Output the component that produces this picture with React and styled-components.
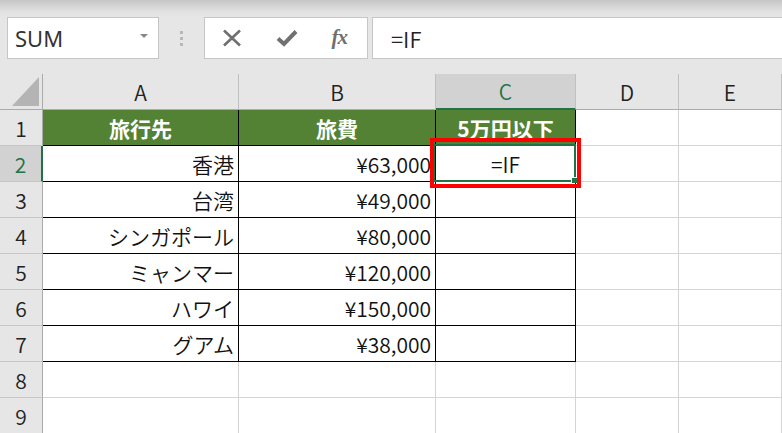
import React from 'react';
import styled, { createGlobalStyle } from 'styled-components';

// ========================== STYLES:BEGIN ========================== //
const GlobalStyle = createGlobalStyle`
  html, body {
    margin: 0;
    padding: 0;
    background: #e6e6e6;
  }
  body {
    font-family: 'Noto Sans CJK JP', 'Noto Sans', sans-serif;
    overflow: hidden;
  }
`;

const Frame = styled.div`
  width: 782px;
  height: 433px;
  display: flex;
  flex-direction: column;
  background: #e6e6e6;
  overflow: hidden;
`;

const TopStrip = styled.div`
  flex: 0 0 17px;
  background: linear-gradient(#c6c6c6, #e2e2e2 70%, #e6e6e6);
`;

const Toolbar = styled.div`
  flex: 0 0 42px;
  display: flex;
  padding-left: 7px;
`;

const Box = styled.div`
  box-sizing: border-box;
  background: #fff;
  border: 1px solid #c6c6c6;
  display: flex;
  align-items: center;
`;

const NameBox = styled(Box)`
  width: 152px;
  justify-content: space-between;
  padding: 0 10px 0 7px;
  font-family: 'Noto Sans', sans-serif;
  font-size: 22px;
  color: #333;
`;

const DropArrow = styled.span`
  width: 0;
  height: 0;
  border-left: 4px solid transparent;
  border-right: 4px solid transparent;
  border-top: 4px solid #888;
  margin-top: -4px;
`;

const Grip = styled.div`
  width: 45px;
  display: flex;
  flex-direction: column;
  align-items: center;
  justify-content: center;
  gap: 3px;
`;

const GripDot = styled.span`
  width: 3px;
  height: 3px;
  background: #b8b8b8;
`;

const ButtonBox = styled(Box)`
  width: 164px;
  justify-content: space-between;
  padding: 0 20px 0 17px;
  color: #6e6e6e;
`;

const Fx = styled.span`
  font-family: 'Liberation Serif', serif;
  font-style: italic;
  font-weight: 700;
  font-size: 21px;
  letter-spacing: -1px;
  color: #707070;
  margin-top: -2px;
`;

const FormulaInput = styled(Box)`
  flex: 1;
  margin-left: 4px;
  border-right: none;
  padding-left: 18px;
  font-size: 22px;
  font-weight: 350;
  color: #222;
`;

const Spacer = styled.div`
  flex: 0 0 15px;
`;

const Sheet = styled.div`
  display: grid;
  grid-template-columns: 43px 196px 197px 140px 103px 103px;
  grid-template-rows: 36px repeat(9, 36px);
  font-size: 21px;
`;

const Corner = styled.div`
  box-sizing: border-box;
  border-right: 1px solid #ababab;
  border-bottom: 1px solid #ababab;
  position: relative;

  &::after {
    content: '';
    position: absolute;
    right: 3px;
    bottom: 3px;
    width: 27px;
    height: 29px;
    background: #b4b4b4;
    clip-path: polygon(100% 0, 100% 100%, 0 100%);
  }
`;

const ColHead = styled.div`
  box-sizing: border-box;
  display: flex;
  align-items: center;
  justify-content: center;
  font-weight: 350;
  background: ${p => (p.$active ? '#d2d2d2' : '#e6e6e6')};
  color: ${p => (p.$active ? '#217346' : '#222')};
  border-right: 1px solid #c0c0c0;
  border-bottom: ${p => (p.$active ? '2px solid #217346' : '1px solid #ababab')};
`;

const RowHead = styled.div`
  box-sizing: border-box;
  display: flex;
  align-items: center;
  justify-content: center;
  font-weight: 350;
  background: ${p => (p.$active ? '#d2d2d2' : '#e6e6e6')};
  color: ${p => (p.$active ? '#217346' : '#222')};
  border-bottom: 1px solid #c6c6c6;
  border-right: ${p => (p.$active ? '2px solid #217346' : '1px solid #ababab')};
`;

const Cell = styled.div`
  box-sizing: border-box;
  position: relative;
  display: flex;
  align-items: center;
  justify-content: ${p => (p.$align === 'right' ? 'flex-end' : 'center')};
  padding: 0 4px;
  white-space: nowrap;
  background: ${p => (p.$head ? '#548235' : '#fff')};
  color: ${p => (p.$head ? '#fff' : '#111')};
  font-weight: ${p => (p.$head ? 700 : 350)};
  border-right: 1px solid ${p => (p.$table ? '#000' : '#d4d4d4')};
  border-bottom: 1px solid ${p => (p.$table ? '#000' : '#d4d4d4')};
`;

const Selection = styled.div`
  position: absolute;
  left: -3px;
  top: -2px;
  right: -1px;
  bottom: -1px;
  border: 2px solid #217346;
  z-index: 2;

  &::after {
    content: '';
    position: absolute;
    right: -3px;
    bottom: -3px;
    width: 5px;
    height: 5px;
    background: #217346;
    border-left: 1px solid #fff;
    border-top: 1px solid #fff;
  }
`;

const Callout = styled.div`
  position: absolute;
  left: -6px;
  top: -8px;
  right: -6px;
  bottom: -7px;
  border: 4px solid #ff0000;
  z-index: 3;
`;
// ========================== STYLES:END ========================== //

const columns = ['A', 'B', 'C', 'D', 'E'];

const rows = [
  { head: true, cells: ['旅行先', '旅費', '5万円以下'] },
  { cells: ['香港', '¥63,000', '=IF'] },
  { cells: ['台湾', '¥49,000', ''] },
  { cells: ['シンガポール', '¥80,000', ''] },
  { cells: ['ミャンマー', '¥120,000', ''] },
  { cells: ['ハワイ', '¥150,000', ''] },
  { cells: ['グアム', '¥38,000', ''] },
  { empty: true },
  { empty: true }
];

const CrossIcon = () => (
  <svg width="20" height="18" viewBox="0 0 20 18">
    <path d="M2 1.5 L18 16.5 M18 1.5 L2 16.5" stroke="#707070" strokeWidth="2.6" fill="none" />
  </svg>
);

const CheckIcon = () => (
  <svg width="22" height="18" viewBox="0 0 22 18">
    <path d="M2 9.5 L8 15 L20 2.5" stroke="#707070" strokeWidth="4" fill="none" strokeLinejoin="miter" />
  </svg>
);

const renderRow = (row, r) => {
  const n = r + 1;
  const active = n === 2;
  const out = [
    <RowHead key={`h${n}`} $active={active}>
      {n}
    </RowHead>
  ];
  for (let c = 0; c < 5; c++) {
    const inTable = !row.empty && c < 3;
    const text = inTable ? row.cells[c] : '';
    const align = row.head || c === 2 ? 'center' : 'right';
    const isCursor = n === 2 && c === 2;
    out.push(
      <Cell key={`${n}${c}`} $table={inTable} $head={inTable && row.head} $align={align}>
        {text}
        {isCursor && <Selection />}
        {isCursor && <Callout />}
      </Cell>
    );
  }
  return out;
};

const App = () => {
  return (
    <Frame>
      <GlobalStyle />
      <TopStrip />
      <Toolbar>
        <NameBox>
          SUM
          <DropArrow />
        </NameBox>
        <Grip>
          <GripDot />
          <GripDot />
          <GripDot />
        </Grip>
        <ButtonBox>
          <CrossIcon />
          <CheckIcon />
          <Fx>fx</Fx>
        </ButtonBox>
        <FormulaInput>=IF</FormulaInput>
      </Toolbar>
      <Spacer />
      <Sheet>
        <Corner />
        {columns.map(col => (
          <ColHead key={col} $active={col === 'C'}>
            {col}
          </ColHead>
        ))}
        {rows.map(renderRow)}
      </Sheet>
    </Frame>
  );
};

export default App;
